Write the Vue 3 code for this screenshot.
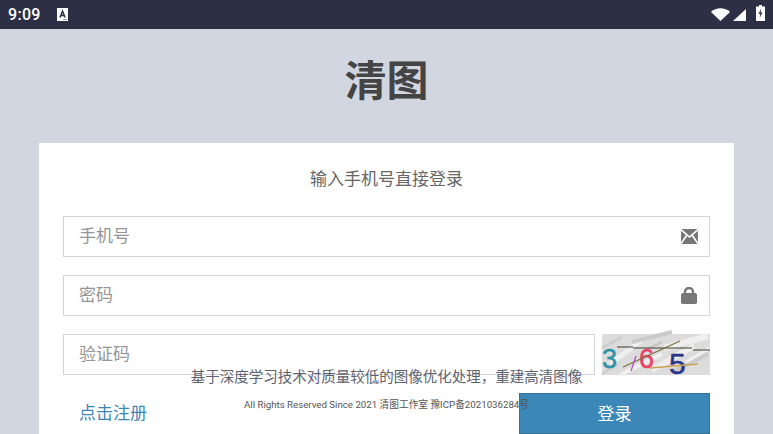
<script setup>
const streaks = [
  [8, 30, 40, 6, 5, "#efefef"], [30, 8, 70, -2, 4, "#cacaca"], [50, 36, 92, 12, 6, "#eeeeee"], [0, 14, 20, 3, 3, "#cdcdcd"],
  [70, 38, 106, 20, 4, "#cbcbcb"], [18, 41, 60, 20, 4, "#f0f0f0"], [62, 14, 106, 2, 6, "#efefef"], [40, 18, 60, 8, 2, "#c4c4c4"],
  [84, 28, 108, 14, 3, "#f1f1f1"], [0, 40, 16, 30, 3, "#cecece"],
]
</script>

<template>
  <div class="page">
    <header class="status">
      <div class="status-left">
        <span class="clock">9:09</span>
        <svg class="a-icon" width="11" height="13" viewBox="0 0 11 13">
          <rect width="11" height="13" fill="#fff" />
          <path d="M3 9.5 5.5 3 8 9.5M3.9 7.6h3.2" fill="none" stroke="#2d2f45" stroke-width="1.5" />
          <rect x="6" y="11" width="4" height="1" fill="#9a9aa8" />
        </svg>
      </div>
      <div class="status-right">
        <svg width="19" height="13" viewBox="0 0 19 13"><path d="M0 4C5 -1 14 -1 19 4L9.5 13Z" fill="#fff" /></svg>
        <svg class="signal" width="13" height="12" viewBox="0 0 13 12"><path d="M13 0V12H0Z" fill="#fff" /></svg>
        <svg class="battery" width="9" height="16" viewBox="0 0 9 16">
          <path d="M3 0h3v1.5h3V16H0V1.5h3Z" fill="#fff" />
          <path d="M5.2 3.5 2.5 9h1.8l-.6 4 2.8-5.5H4.7Z" fill="#2d2f45" />
        </svg>
      </div>
    </header>

    <main class="body">
      <h1 class="title">清图</h1>
      <section class="card">
        <p class="hint">输入手机号直接登录</p>
        <div class="field">
          <span class="placeholder">手机号</span>
          <svg width="17" height="15" viewBox="0 0 17 15">
            <path d="M0 0h17v15H0Z" fill="#777" />
            <path d="M0 .6 8.5 8 17 .6M0 14.6 6 6M17 14.6 11 6" fill="none" stroke="#fff" stroke-width="1.6" />
          </svg>
        </div>
        <div class="field">
          <span class="placeholder">密码</span>
          <svg class="lock" width="16" height="17" viewBox="0 0 16 17">
            <path d="M4 7V5a4 4 0 0 1 8 0v2" fill="none" stroke="#777" stroke-width="2.4" />
            <rect y="6" width="16" height="11" rx="1.8" fill="#777" />
          </svg>
        </div>
        <div class="captcha-row">
          <div class="field grow"><span class="placeholder">验证码</span></div>
          <svg class="captcha" width="108" height="41" viewBox="0 0 108 41">
            <rect width="108" height="41" fill="#dcdcdc" />
            <path v-for="(n, i) in streaks" :key="i" :d="`M${n[0]} ${n[1]}L${n[2]} ${n[3]}`" :stroke="n[5]" :stroke-width="n[4]" />
            <text x="0" y="34" class="cap-digit" fill="#2f93a8" stroke="#2f93a8" font-size="27">3</text>
            <text x="37" y="34" class="cap-digit" fill="#ee3f68" stroke="#ee3f68" font-size="27">6</text>
            <text x="67" y="40" class="cap-digit" fill="#2c3488" stroke="#2c3488" font-size="30">5</text>
            <path d="M15 13H31M31 14H90M91 16H108" stroke="#3d3a2c" stroke-width="1.1" fill="none" />
            <path d="M21 33 78 7" stroke="#77703a" stroke-width="1.2" />
            <path d="M48 34 96 30" stroke="#c8a24e" stroke-width="1.3" />
            <path d="M29 37 34 22" stroke="#b24fc8" stroke-width="1.3" />
          </svg>
        </div>
        <div class="actions">
          <a class="register">点击注册</a>
          <button class="login"><span>登录</span></button>
        </div>
      </section>
    </main>

    <footer class="footer">
      <p class="slogan">基于深度学习技术对质量较低的图像优化处理，重建高清图像</p>
      <p class="copyright">All Rights Reserved Since 2021 清图工作室 豫ICP备2021036284号</p>
    </footer>
  </div>
</template>

<style scoped>
.page {
  position: relative;
  width: 773px;
  height: 434px;
  overflow: hidden;
  background: #d2d6e0;
  font-family: Roboto, "Noto Sans CJK SC", sans-serif;
}
.status {
  height: 29px;
  box-sizing: border-box;
  padding: 0 8px;
  background: #2d2f45;
  display: flex;
  justify-content: space-between;
  align-items: center;
}
.status-left { display: flex; align-items: center; gap: 16px; }
.clock { color: #fff; font-size: 16px; font-weight: 500; letter-spacing: .3px; }
.a-icon { margin-top: -1px; }
.status-right { display: flex; align-items: center; gap: 3px; }
.signal { margin-top: 1px; }
.battery { margin-left: 7px; margin-top: -3px; }
.title {
  margin: 0;
  height: 114px;
  line-height: 106px;
  text-align: center;
  font-size: 42px;
  font-weight: 700;
  color: #444;
}
.card {
  margin: 0 39px;
  padding: 0 24px;
  height: 321px;
  background: #fff;
}
.hint {
  margin: 0;
  height: 73px;
  line-height: 72px;
  text-align: center;
  font-size: 17px;
  color: #666;
}
.field {
  height: 41px;
  box-sizing: border-box;
  margin-bottom: 18px;
  padding: 0 11px 0 15px;
  border: 1px solid #d3d6d8;
  display: flex;
  align-items: center;
  justify-content: space-between;
}
.placeholder { font-size: 17px; color: #959595; margin-bottom: 5px; }
.lock { margin-right: 1px; }
.captcha-row { display: flex; gap: 7px; }
.grow { flex: 1; }
.captcha { flex: none; overflow: visible; }
.cap-digit { font-family: "Liberation Sans", sans-serif; stroke-width: .5px; }
.actions { display: flex; align-items: center; justify-content: space-between; }
.register { margin: 0 0 5px 16px; font-size: 17px; color: #3b87b5; }
.login {
  width: 191px;
  height: 41px;
  padding: 0 0 3px;
  border: 1px solid #34729c;
  background: #3b87b8;
  color: #fff;
  font: 17px Roboto, "Noto Sans CJK SC", sans-serif;
}
.footer {
  position: absolute;
  left: 0;
  right: 0;
  top: 366px;
  text-align: center;
}
.slogan {
  margin: 0;
  height: 24px;
  line-height: 24px;
  font-size: 14.5px;
  color: #5d6270;
}
.copyright {
  margin: 3px 0 0;
  font-size: 9.7px;
  line-height: 24px;
  color: #555;
}
</style>
